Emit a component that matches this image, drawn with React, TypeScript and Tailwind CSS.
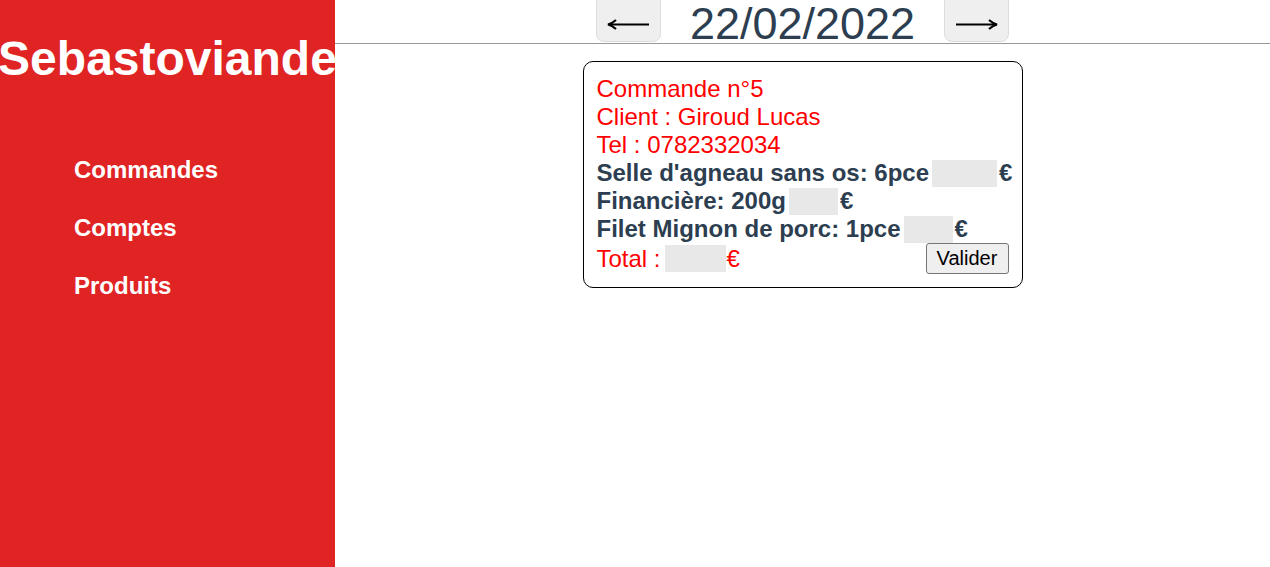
import React from "react";

const items = [
  { label: "Selle d'agneau sans os: 6pce", box: "w-[65px]" },
  { label: "Financière: 200g", box: "w-[49px]" },
  { label: "Filet Mignon de porc: 1pce", box: "w-[49px]" },
];

const Arrow: React.FC<{ dir: "left" | "right" }> = ({ dir }) => (
  <svg width="42" height="11" viewBox="0 0 42 11" className={dir === "right" ? "rotate-180" : ""}>
    <path d="M2 5.5 H42" stroke="black" strokeWidth="2" fill="none" />
    <path d="M9 1 Q5 4.5 1 5.5 Q5 6.5 9 10" stroke="black" strokeWidth="2.2" fill="none" />
  </svg>
);

const Sidebar: React.FC = () => {
  return (
    <div className="w-[335px] shrink-0 h-[567px] bg-[#e02424] text-white">
      <h1 className="mt-[31px] text-[48px] font-bold text-center whitespace-nowrap leading-[55px] -mx-[4px]">
        Sebastoviande
      </h1>
      <nav className="mt-[70px] pl-[74px] flex flex-col gap-[30px] text-[24px] font-bold leading-[28px]">
        <a>Commandes</a>
        <a>Comptes</a>
        <a>Produits</a>
      </nav>
    </div>
  );
};

const Order: React.FC = () => {
  return (
    <div className="mt-[17px] mx-auto w-[440px] border border-black rounded-[10px] pl-[13px] pr-[13px] pt-[13px] pb-[13px] text-[24px] leading-[28px]">
      <div className="text-[#ff0000]">Commande n°5</div>
      <div className="text-[#ff0000]">Client : Giroud Lucas</div>
      <div className="text-[#ff0000]">Tel : 0782332034</div>
      {items.map((item, i) => (
        <div key={"item" + i} className="flex items-center font-bold text-[#2c3e50] whitespace-nowrap">
          <span>{item.label}</span>
          <span className={"inline-block shrink-0 h-[27px] bg-[#e8e8e8] ml-[3px] mr-[2px] " + item.box}></span>
          <span>€</span>
        </div>
      ))}
      <div className="flex items-center justify-between h-[31px]">
        <div className="flex items-center text-[#ff0000]">
          <span>Total :</span>
          <span className="inline-block w-[61px] h-[27px] bg-[#e8e8e8] ml-[4px] mr-[1px]"></span>
          <span>€</span>
        </div>
        <button className="h-[31px] w-[83px] text-[20px] leading-[23px] text-black bg-[#efefef] border border-[#767676] rounded-[3px]">
          Valider
        </button>
      </div>
    </div>
  );
};

export default function App() {
  return (
    <div
      className="flex w-full h-[567px] overflow-hidden bg-white"
      style={{ fontFamily: '"Liberation Sans", Arial, sans-serif' }}
    >
      <Sidebar />
      <main className="flex-1">
        <div className="h-[44px] border-b border-[#999] flex justify-center items-start">
          <button className="w-[65px] h-[48px] -mt-[6px] bg-[#efefef] border border-[#dcdcdc] rounded-[8px] flex items-center justify-center pt-[13px]">
            <Arrow dir="left" />
          </button>
          <div className="mx-[29px] h-[43px] pt-[2px] text-[45px] leading-[43px] text-[#2c3e50]">
            22/02/2022
          </div>
          <button className="w-[65px] h-[48px] -mt-[6px] bg-[#efefef] border border-[#dcdcdc] rounded-[8px] flex items-center justify-center pt-[13px]">
            <Arrow dir="right" />
          </button>
        </div>
        <Order />
      </main>
    </div>
  );
}
